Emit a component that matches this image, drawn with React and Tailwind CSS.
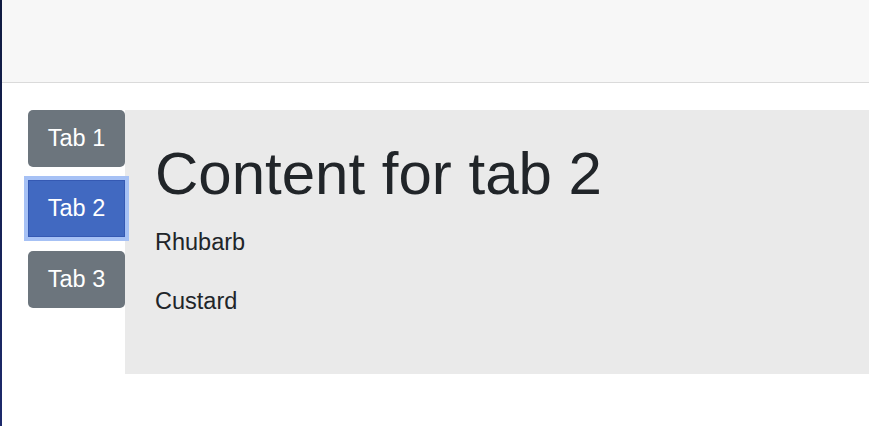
import { useState } from "react";

const tabs = [
  { id: 1, items: ["Apple", "Pear"] },
  { id: 2, items: ["Rhubarb", "Custard"] },
  { id: 3, items: ["Toffee", "Fudge"] },
];

const App = () => {
  const [active, setActive] = useState(2);
  const current = tabs.find((t) => t.id === active);

  return (
    <div
      className="flex h-[426px] w-full bg-white text-[#212529]"
      style={{ fontFamily: '"Liberation Sans", Arial, sans-serif' }}
    >
      <div className="w-[2px] shrink-0 bg-gradient-to-b from-[#0f1a40] to-[#1d2a6c]" />
      <div className="flex flex-1 flex-col">
        <header className="h-[83px] shrink-0 border-b border-[#dadada] bg-[#f7f7f7]" />
        <main className="flex pt-[27px] pl-[26px]">
          <div className="relative z-10 flex w-[97px] shrink-0 flex-col">
            {tabs.map((tab, i) => (
              <button
                key={tab.id}
                onClick={() => setActive(tab.id)}
                className={
                  tab.id === active
                    ? "h-[57px] w-[97px] border border-[#3559b3] bg-[#4169c1] pt-px text-[23.5px] text-white shadow-[0_0_0_4px_#a6c1f5] " +
                      (i === 0 ? "" : "mt-[13px]")
                    : "h-[57px] w-[97px] rounded-[5px] bg-[#6c757d] pt-px text-[23.5px] text-white " +
                      (i === 0 ? "" : "mt-[14px]")
                }
              >
                Tab {tab.id}
              </button>
            ))}
          </div>
          <section className="flex-1 bg-[#eaeaea] pt-[28px] pb-[30px] pl-[30px]">
            <h1 className="mb-[15px] text-[60px] leading-[1.2]">
              Content for tab {current.id}
            </h1>
            {current.items.map((item) => (
              <p key={item} className="mb-[24px] text-[23.5px] leading-[1.5]">
                {item}
              </p>
            ))}
          </section>
        </main>
      </div>
    </div>
  );
};

export default App;
